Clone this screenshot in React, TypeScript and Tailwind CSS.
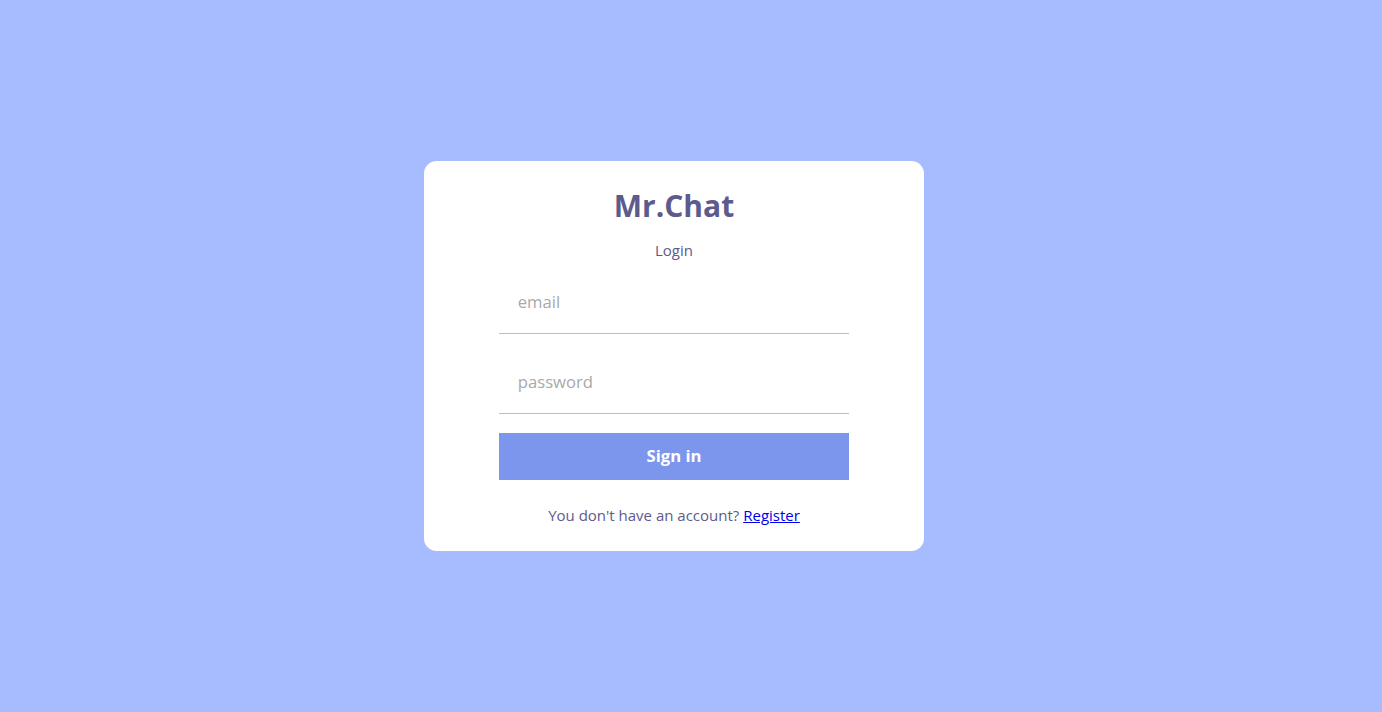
import React from "react";

export default function App() {
  return (
    <div
      className="h-[712px] w-full bg-[#a7bcff] flex items-center justify-center pr-[34px]"
      style={{ fontFamily: '"Open Sans", "Noto Sans", sans-serif' }}
    >
      <div className="bg-white px-[75px] py-[25px] rounded-[12.5px] flex flex-col items-center gap-[12.5px]">
        <span className="text-[#5d5b8d] font-bold text-[30px] leading-[1.362]">Mr.Chat</span>
        <span className="text-[#5d5b8d] text-[15px] leading-[1.362]">Login</span>
        <form className="flex flex-col gap-[18.75px]" onSubmit={(e) => e.preventDefault()}>
          <input
            type="email"
            placeholder="email"
            className="w-[350px] p-[18.75px] text-[16.67px] leading-[1.362] border-0 border-b border-[#a7bcff] outline-none placeholder:text-[#a9a9a9]"
          />
          <input
            type="password"
            placeholder="password"
            className="w-[350px] p-[18.75px] text-[16.67px] leading-[1.362] border-0 border-b border-[#a7bcff] outline-none placeholder:text-[#a9a9a9]"
          />
          <button className="bg-[#7b96ec] text-white font-bold p-[12.5px] text-[16.67px] leading-[1.362]">
            Sign in
          </button>
        </form>
        <p className="text-[#5d5b8d] text-[15px] leading-[1.362] mt-[12.5px]">
          You don't have an account?{" "}
          <a href="#" className="text-[#0000ee] underline">
            Register
          </a>
        </p>
      </div>
    </div>
  );
}
